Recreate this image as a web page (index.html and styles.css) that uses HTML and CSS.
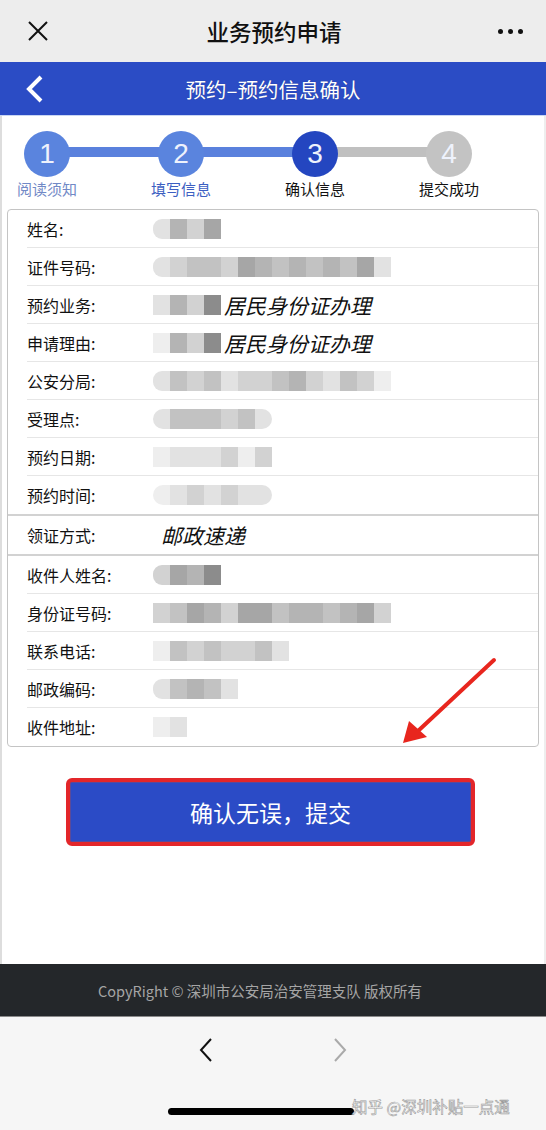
FILE: index.html
```html
<!DOCTYPE html>
<html lang="zh-CN">
<head>
    <meta charset="UTF-8">
    <meta name="viewport" content="width=device-width, initial-scale=1.0">
    <link rel="stylesheet" href="styles.css">
    <title>业务预约申请</title>
</head>

<body>
    <div class="topbar">
        <svg class="close" viewBox="0 0 20 20" width="20" height="20">
            <path d="M1 1 L19 19 M19 1 L1 19" stroke="#111" stroke-width="2" fill="none"/>
        </svg>
        <div class="topbar-title">业务预约申请</div>
        <div class="dots"><i></i><i></i><i></i></div>
    </div>

    <div class="header">
        <svg class="back" viewBox="0 0 20 28" width="20" height="28">
            <path d="M16 2 L4 14 L16 26" stroke="#fff" stroke-width="4" fill="none" stroke-linejoin="miter"/>
        </svg>
        <div class="header-title">预约–预约信息确认</div>
    </div>

    <div class="main">
        <div class="steps">
            <div class="step done dim">
                <div class="circle">1</div>
                <div class="step-label">阅读须知</div>
            </div>
            <div class="step done">
                <div class="circle">2</div>
                <div class="step-label">填写信息</div>
            </div>
            <div class="step current">
                <div class="circle">3</div>
                <div class="step-label">确认信息</div>
            </div>
            <div class="step todo">
                <div class="circle">4</div>
                <div class="step-label">提交成功</div>
            </div>
        </div>

        <div class="card">
            <div class="section">
                <div class="row"><span class="label">姓名:</span>
                    <span class="mosaic"><i class="g2 r"></i><i class="g5"></i><i class="g3"></i><i class="g6"></i></span></div>
                <div class="row"><span class="label">证件号码:</span>
                    <span class="mosaic"><i class="g2 r"></i><i class="g3"></i><i class="g4"></i><i class="g4"></i><i class="g3"></i><i class="g6"></i><i class="g5"></i><i class="g4"></i><i class="g5"></i><i class="g4"></i><i class="g5"></i><i class="g4"></i><i class="g6"></i><i class="g2"></i></span></div>
                <div class="row"><span class="label">预约业务:</span>
                    <span class="mosaic"><i class="g2"></i><i class="g5"></i><i class="g3"></i><i class="g7"></i></span><span class="value">居民身份证办理</span></div>
                <div class="row"><span class="label">申请理由:</span>
                    <span class="mosaic"><i class="g1"></i><i class="g5"></i><i class="g3"></i><i class="g7"></i></span><span class="value">居民身份证办理</span></div>
                <div class="row"><span class="label">公安分局:</span>
                    <span class="mosaic"><i class="g2 r"></i><i class="g4"></i><i class="g3"></i><i class="g4"></i><i class="g2"></i><i class="g3"></i><i class="g3"></i><i class="g4"></i><i class="g5"></i><i class="g3"></i><i class="g2"></i><i class="g4"></i><i class="g3"></i><i class="g1"></i></span></div>
                <div class="row"><span class="label">受理点:</span>
                    <span class="mosaic round"><i class="g2"></i><i class="g4"></i><i class="g4"></i><i class="g4"></i><i class="g3"></i><i class="g4"></i><i class="g2"></i></span></div>
                <div class="row"><span class="label">预约日期:</span>
                    <span class="mosaic"><i class="g1"></i><i class="g2"></i><i class="g2"></i><i class="g2"></i><i class="g3"></i><i class="g1"></i><i class="g3"></i></span></div>
                <div class="row"><span class="label">预约时间:</span>
                    <span class="mosaic round"><i class="g1"></i><i class="g2"></i><i class="g3"></i><i class="g2"></i><i class="g3"></i><i class="g2"></i><i class="g2"></i></span></div>
            </div>
            <div class="section">
                <div class="row"><span class="label">领证方式:</span>
                    <span class="value short">邮政速递</span></div>
            </div>
            <div class="section">
                <div class="row"><span class="label">收件人姓名:</span>
                    <span class="mosaic"><i class="g3 r"></i><i class="g6"></i><i class="g5"></i><i class="g7"></i></span></div>
                <div class="row"><span class="label">身份证号码:</span>
                    <span class="mosaic"><i class="g3"></i><i class="g4"></i><i class="g6"></i><i class="g5"></i><i class="g3"></i><i class="g6"></i><i class="g6"></i><i class="g4"></i><i class="g5"></i><i class="g5"></i><i class="g4"></i><i class="g5"></i><i class="g6"></i><i class="g3"></i></span></div>
                <div class="row"><span class="label">联系电话:</span>
                    <span class="mosaic"><i class="g1"></i><i class="g4"></i><i class="g3"></i><i class="g4"></i><i class="g3"></i><i class="g3"></i><i class="g4"></i><i class="g2"></i></span></div>
                <div class="row"><span class="label">邮政编码:</span>
                    <span class="mosaic"><i class="g2 r"></i><i class="g4"></i><i class="g5"></i><i class="g4"></i><i class="g2"></i></span></div>
                <div class="row"><span class="label">收件地址:</span>
                    <span class="mosaic"><i class="g1"></i><i class="g2"></i></span></div>
            </div>
        </div>

        <button class="submit">确认无误，提交</button>
    </div>

    <div class="footer">CopyRight © 深圳市公安局治安管理支队 版权所有</div>

    <div class="browserbar">
        <div class="nav">
            <svg viewBox="0 0 14 24" width="14" height="24"><path d="M12 1 L2 12 L12 23" stroke="#111" stroke-width="2" fill="none"/></svg>
            <svg viewBox="0 0 14 24" width="14" height="24"><path d="M2 1 L12 12 L2 23" stroke="#aaa" stroke-width="2" fill="none"/></svg>
        </div>
        <div class="home"></div>
    </div>

    <div class="watermark">知乎 @深圳补贴一点通</div>

    <svg class="arrow" width="546" height="1130" viewBox="0 0 546 1130">
        <path d="M494 660 L418 731" stroke="#e8261e" stroke-width="4" stroke-linecap="round"/>
        <path d="M403 743 L409 721 L427 737 Z" fill="#e8261e"/>
    </svg>
</body>
</html>
```

FILE: styles.css
```css
body {
    margin: 0;
    width: 546px;
    height: 1130px;
    position: relative;
    display: flex;
    flex-direction: column;
    font-family: "Noto Sans CJK SC", "Noto Sans", sans-serif;
    color: #111;
    background-color: #fff;
    overflow: hidden;
}
.topbar {
    height: 62px;
    flex: none;
    display: flex;
    align-items: center;
    justify-content: space-between;
    padding: 0 23px 0 28px;
    background-color: #ededed;
}
.topbar-title {
    font-size: 22.5px;
    font-weight: 500;
    margin-left: 2px;
}
.dots {
    display: flex;
    gap: 5px;
}
.dots i {
    width: 5px;
    height: 5px;
    border-radius: 50%;
    background-color: #111;
}
.header {
    height: 54px;
    flex: none;
    display: flex;
    align-items: center;
    background-color: #2b4cc5;
    border-bottom: 1px solid #c9d6f3;
    box-sizing: border-box;
    padding-left: 25px;
}
.back {
    flex: none;
}
.header-title {
    flex: 1;
    text-align: center;
    color: #fff;
    font-size: 20.5px;
    margin-right: 45px;
    text-shadow: 0 0 1px rgba(0,0,0,0.3);
}
.main {
    flex: 1;
    border-left: 2px solid #ddd;
    border-right: 2px solid #eee;
    box-sizing: border-box;
}
.steps {
    position: relative;
    display: flex;
    gap: 40px;
    margin-left: -2px;
    padding-top: 15px;
    height: 77px;
}
.steps::before {
    content: "";
    position: absolute;
    left: 47px;
    width: 402px;
    top: 31px;
    height: 10px;
    background: linear-gradient(to right, #5a81dd 0, #5a81dd 268px, #c0c0c0 268px);
}
.step {
    position: relative;
    width: 94px;
    display: flex;
    flex-direction: column;
    align-items: center;
}
.circle {
    width: 46px;
    height: 46px;
    border-radius: 50%;
    display: grid;
    place-items: center;
    color: #eef2fc;
    font-family: "Liberation Sans", Arial, sans-serif;
    font-size: 28px;
}
.step-label {
    margin-top: 1px;
    font-size: 15px;
    line-height: 22px;
}
.done .circle { background-color: #5a84de; }
.done .step-label { color: #3d5fc2; }
.dim .step-label { color: #7189c6; }
.current .circle { background-color: #2446c0; }
.todo .circle { background-color: #c3c3c3; }

.card {
    margin: 1px 5px 0 5px;
    border: 1px solid #c4c4c4;
    border-radius: 4px;
}
.section {
    padding-bottom: 1px;
}
.section + .section {
    border-top: 2px solid #d2d2d2;
}
.row {
    height: 37px;
    margin-left: 19px;
    display: flex;
    align-items: center;
    border-bottom: 1px solid #e6e6e6;
}
.section .row:last-child {
    border-bottom: none;
}
.label {
    width: 126px;
    flex: none;
    font-size: 16px;
}
.mosaic {
    display: flex;
    filter: blur(0.6px);
}
.mosaic i {
    width: 17px;
    height: 20px;
}
.mosaic .r {
    border-radius: 9px 0 0 9px;
}
.mosaic.round i:first-child { border-radius: 10px 0 0 10px; }
.mosaic.round i:last-child { border-radius: 0 10px 10px 0; }
.g1 { background-color: #eeeeee; }
.g2 { background-color: #e2e2e2; }
.g3 { background-color: #d2d2d2; }
.g4 { background-color: #c2c2c2; }
.g5 { background-color: #b4b4b4; }
.g6 { background-color: #a6a6a6; }
.g7 { background-color: #8c8c8c; }
.value {
    font-size: 21px;
    font-style: italic;
    margin-left: 3px;
}
.value.short {
    margin-left: 8px;
}
.submit {
    display: block;
    margin: 31px 0 0 64px;
    width: 409px;
    height: 68px;
    border: 4px solid #e3262a;
    border-radius: 6px;
    background-color: #2b4bc6;
    box-shadow: inset 0 0 0 1px #5a4a9a;
    color: #fff;
    font-family: inherit;
    font-size: 23px;
}
.footer {
    height: 53px;
    flex: none;
    background-color: #24272a;
    border-bottom: 1px solid #8a8a8a;
    color: #a5a5a5;
    font-size: 14.5px;
    display: grid;
    place-items: center;
    padding-right: 26px;
    box-sizing: border-box;
}
.browserbar {
    height: 113px;
    flex: none;
    background-color: #f6f6f6;
    display: flex;
    flex-direction: column;
    align-items: center;
}
.nav {
    display: flex;
    gap: 120px;
    margin-top: 21px;
    margin-left: -1px;
}
.home {
    margin-top: 46px;
    margin-left: -24px;
    width: 186px;
    height: 7px;
    border-radius: 4px;
    background-color: #000;
}
.watermark {
    position: absolute;
    left: 352px;
    top: 1095px;
    font-size: 15.5px;
    color: #fff;
    -webkit-text-stroke: 0.6px #9a9a9a;
}
.arrow {
    position: absolute;
    left: 0;
    top: 0;
    pointer-events: none;
}
```
